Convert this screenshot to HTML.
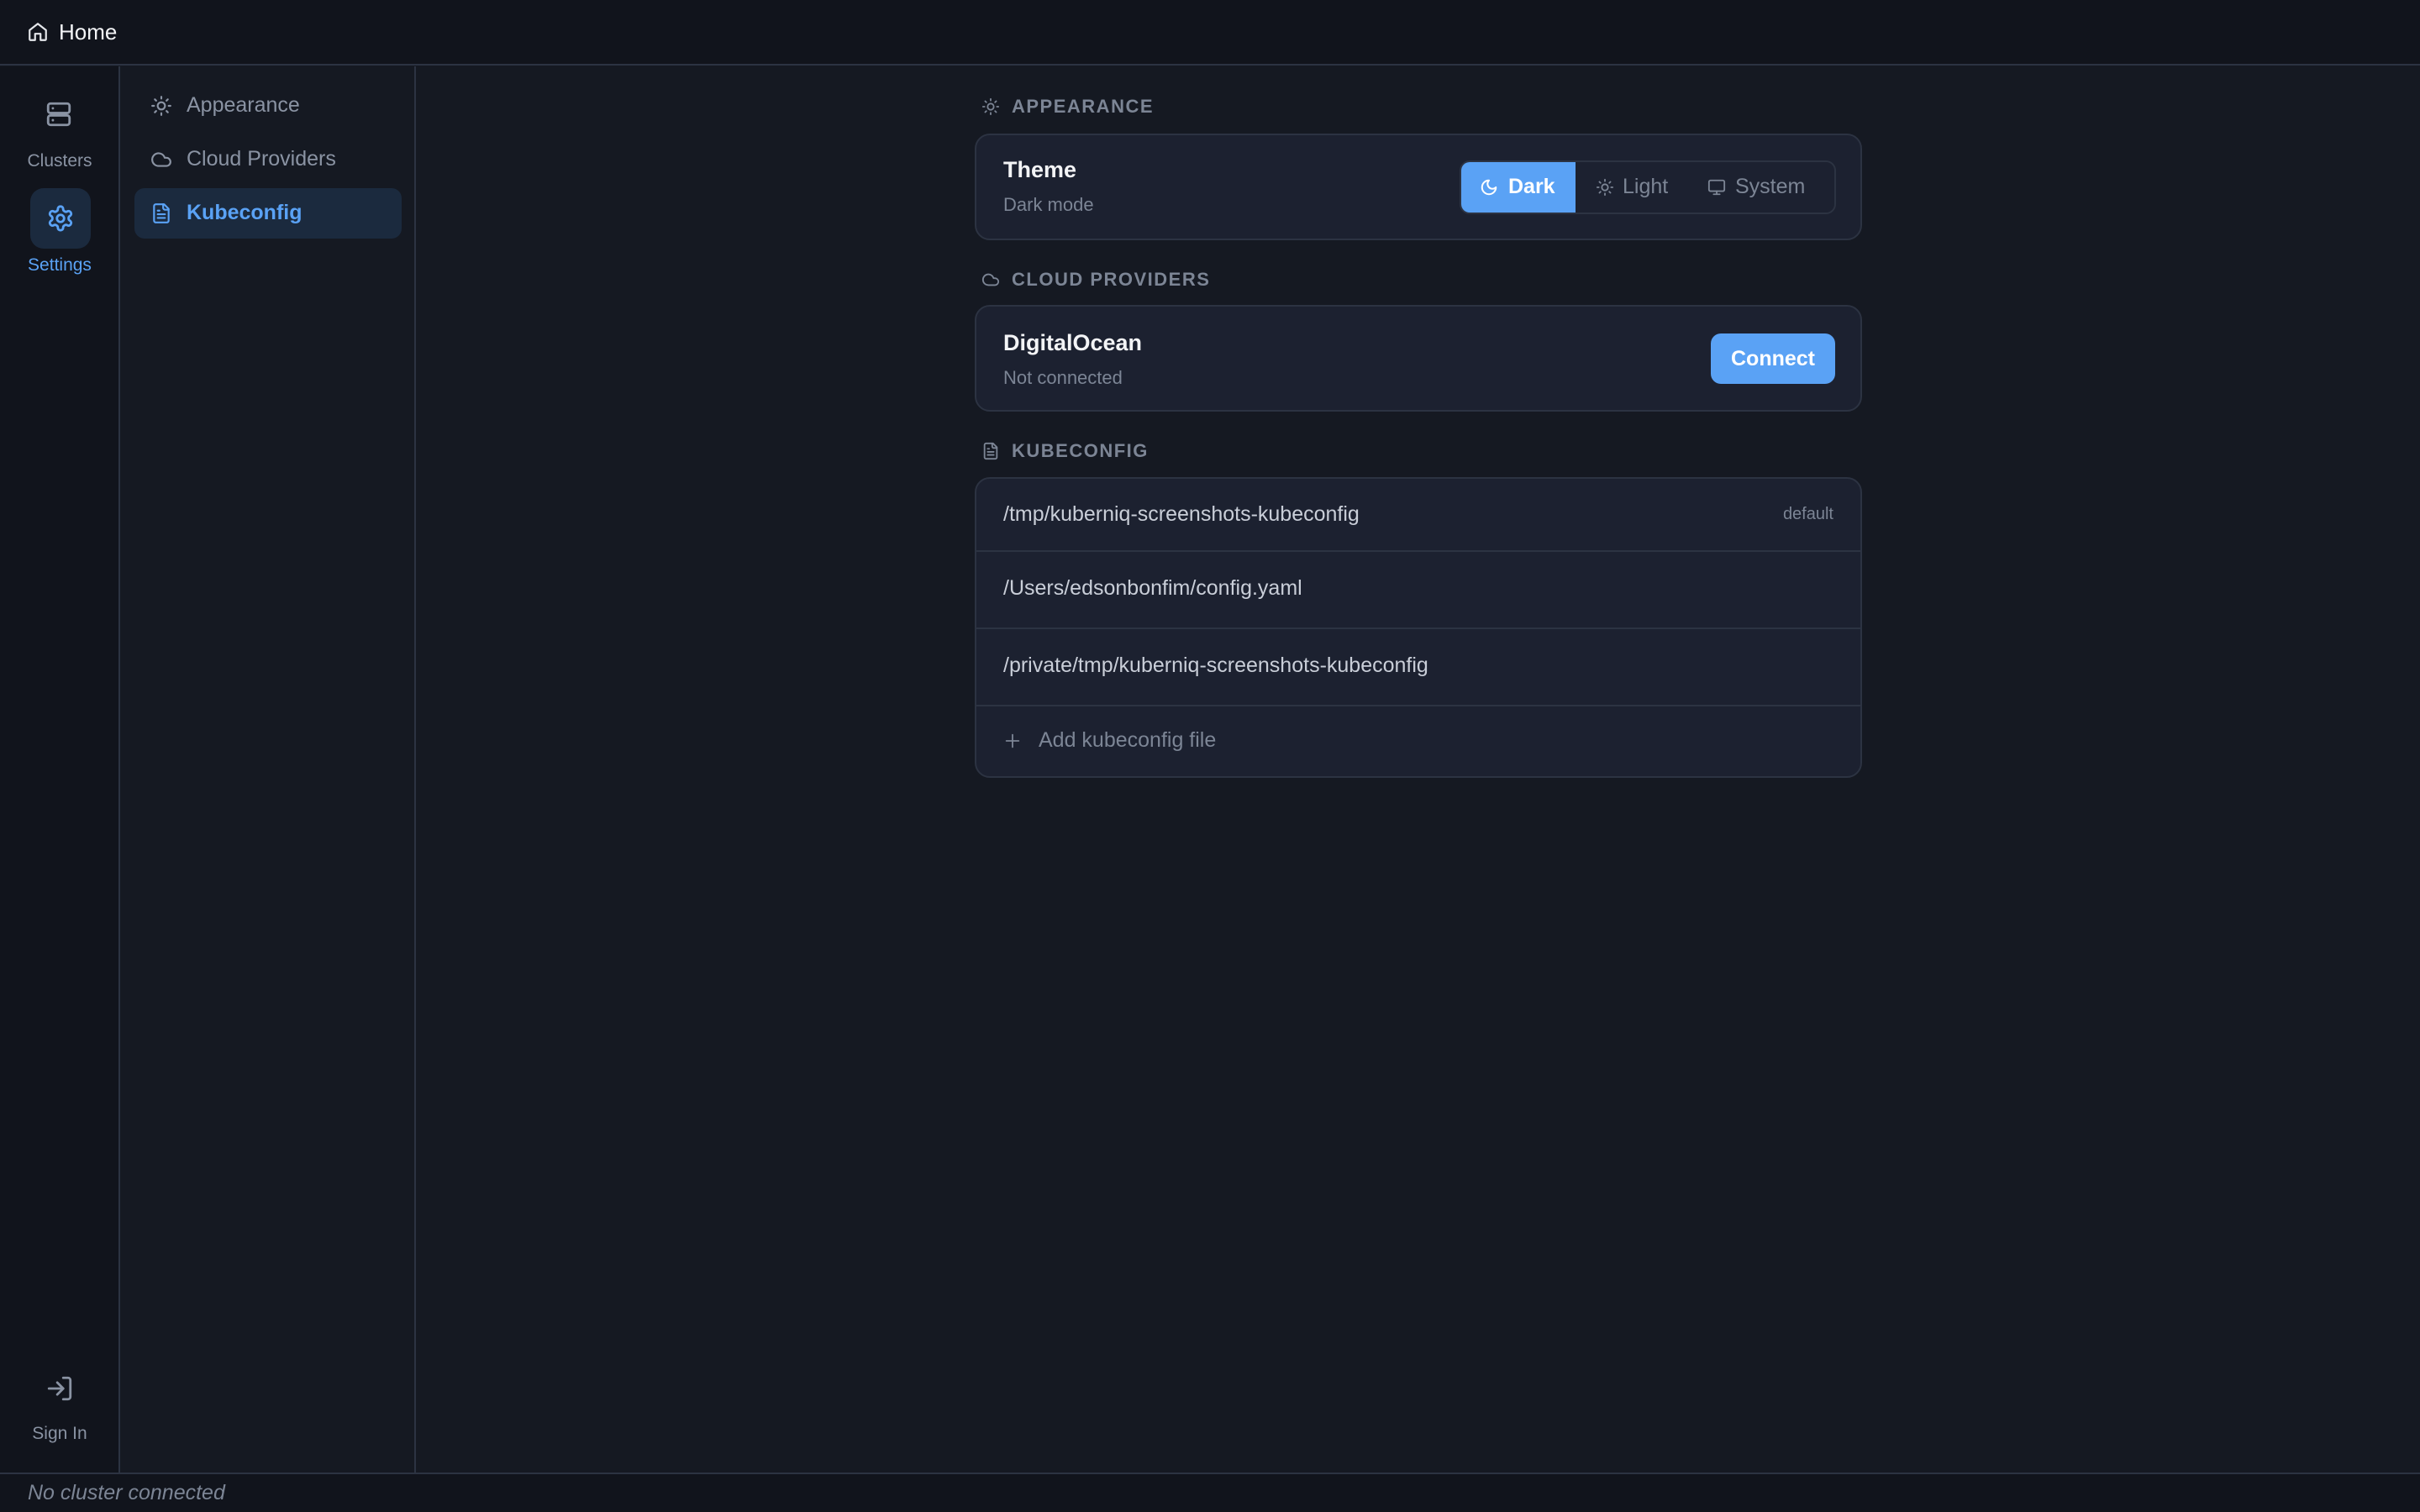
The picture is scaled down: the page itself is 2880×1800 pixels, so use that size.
<!DOCTYPE html>
<html><head><meta charset="utf-8"><style>
*{box-sizing:border-box;margin:0;padding:0}
body{width:2880px;height:1800px;overflow:hidden;background:#151922;font-family:"Liberation Sans",sans-serif;color:#e5e7eb;position:relative}
.a{position:absolute}
svg{fill:none;stroke-linecap:round;stroke-linejoin:round}
.top{left:0;top:0;width:2880px;height:78px;background:#11141c;border-bottom:2px solid #2c3342}
.rail{left:0;top:79px;width:143px;height:1674px;background:#11141c;border-right:2px solid #2c3342}
.side{left:143px;top:79px;width:352px;height:1674px;background:#151922;border-right:2px solid #2c3342}
.status{left:0;top:1753px;width:2880px;height:47px;background:#11141c;border-top:2px solid #2c3342}
.rl{width:142px;text-align:center;font-size:21px;color:#8a93a3}
.nav{font-size:25px;color:#8a93a3}
.sec{font-size:22px;font-weight:bold;letter-spacing:1.5px;color:#7c8595}
.card{left:1160px;width:1056px;background:#1c2130;border:2px solid #2c3342;border-radius:18px}
.t1{font-size:27px;font-weight:bold;color:#f3f4f6}
.t2{font-size:22px;color:#7c8595}
.p{font-size:25px;color:#c9ced8;left:32px}
.sep{left:0;width:1052px;height:2px;background:#2c3342}
</style></head><body>
<div class="a top">
 <svg class="a" style="left:32px;top:25px" width="26" height="26" viewBox="0 0 24 24" stroke="#e5e7eb" stroke-width="2"><path d="M3 10l9-7 9 7v10a1 1 0 0 1-1 1h-5v-7h-6v7H4a1 1 0 0 1-1-1z"/></svg>
 <div class="a" style="left:70px;top:23px;font-size:26px;color:#f3f4f6">Home</div>
</div>
<div class="a rail">
 <svg class="a" style="left:53px;top:40px" width="34" height="34" viewBox="0 0 24 24" stroke="#8a93a3" stroke-width="2"><rect x="3" y="3" width="18" height="8" rx="2"/><rect x="3" y="13" width="18" height="8" rx="2"/><path d="M7 7h.01M7 17h.01"/></svg>
 <div class="a rl" style="top:101px">Clusters</div>
 <div class="a" style="left:36px;top:145px;width:72px;height:72px;border-radius:16px;background:#1b2a3e"></div>
 <svg class="a" style="left:55px;top:164px" width="34" height="34" viewBox="0 0 24 24" stroke="#5aa2f5" stroke-width="2"><path d="M12.2 2h-.4a2 2 0 0 0-2 2v.2a2 2 0 0 1-1 1.7l-.4.3a2 2 0 0 1-2 0l-.2-.1a2 2 0 0 0-2.7.7l-.2.4a2 2 0 0 0 .7 2.7l.2.1a2 2 0 0 1 1 1.7v.5a2 2 0 0 1-1 1.7l-.2.1a2 2 0 0 0-.7 2.7l.2.4a2 2 0 0 0 2.7.7l.2-.1a2 2 0 0 1 2 0l.4.3a2 2 0 0 1 1 1.7v.2a2 2 0 0 0 2 2h.4a2 2 0 0 0 2-2v-.2a2 2 0 0 1 1-1.7l.4-.3a2 2 0 0 1 2 0l.2.1a2 2 0 0 0 2.7-.7l.2-.4a2 2 0 0 0-.7-2.7l-.2-.1a2 2 0 0 1-1-1.7v-.5a2 2 0 0 1 1-1.7l.2-.1a2 2 0 0 0 .7-2.7l-.2-.4a2 2 0 0 0-2.7-.7l-.2.1a2 2 0 0 1-2 0l-.4-.3a2 2 0 0 1-1-1.7V4a2 2 0 0 0-2-2z"/><circle cx="12" cy="12" r="3"/></svg>
 <div class="a rl" style="top:225px;color:#5aa2f5">Settings</div>
 <svg class="a" style="left:54px;top:1557px" width="34" height="34" viewBox="0 0 24 24" stroke="#8a93a3" stroke-width="2"><path d="M15 3h4a2 2 0 0 1 2 2v14a2 2 0 0 1-2 2h-4M10 17l5-5-5-5M15 12H3"/></svg>
 <div class="a rl" style="top:1616px">Sign In</div>
</div>
<div class="a side">
 <svg class="a" style="left:36px;top:34px" width="26" height="26" viewBox="0 0 24 24" stroke="#8a93a3" stroke-width="2"><circle cx="12" cy="12" r="4"/><path d="M12 2v2M12 20v2M4.9 4.9l1.4 1.4M17.7 17.7l1.4 1.4M2 12h2M20 12h2M6.3 17.7l-1.4 1.4M19.1 4.9l-1.4 1.4"/></svg>
 <div class="a nav" style="left:79px;top:32px">Appearance</div>
 <svg class="a" style="left:36px;top:98px" width="26" height="26" viewBox="0 0 24 24" stroke="#8a93a3" stroke-width="2"><path d="M17.5 19H9a7 7 0 1 1 6.7-9h1.8a4.5 4.5 0 1 1 0 9z"/></svg>
 <div class="a nav" style="left:79px;top:96px">Cloud Providers</div>
 <div class="a" style="left:17px;top:145px;width:318px;height:60px;border-radius:12px;background:#1b2a3e"></div>
 <svg class="a" style="left:36px;top:162px" width="26" height="26" viewBox="0 0 24 24" stroke="#5aa2f5" stroke-width="2"><path d="M15 2H6a2 2 0 0 0-2 2v16a2 2 0 0 0 2 2h12a2 2 0 0 0 2-2V7z"/><path d="M14 2v4a2 2 0 0 0 2 2h4M10 9H8M16 13H8M16 17H8"/></svg>
 <div class="a nav" style="left:79px;top:160px;color:#5aa2f5;font-weight:bold">Kubeconfig</div>
</div>
<div class="a status"><div class="a" style="left:33px;top:8px;font-size:25px;font-style:italic;color:#7c8595">No cluster connected</div></div>

<svg class="a" style="left:1168px;top:116px" width="22" height="22" viewBox="0 0 24 24" stroke="#7c8595" stroke-width="2"><circle cx="12" cy="12" r="4"/><path d="M12 2v2M12 20v2M4.9 4.9l1.4 1.4M17.7 17.7l1.4 1.4M2 12h2M20 12h2M6.3 17.7l-1.4 1.4M19.1 4.9l-1.4 1.4"/></svg>
<div class="a sec" style="left:1204px;top:114px">APPEARANCE</div>
<div class="a card" style="top:159px;height:127px">
 <div class="a t1" style="left:32px;top:26px">Theme</div>
 <div class="a t2" style="left:32px;top:70px">Dark mode</div>
 <div class="a" style="left:575px;top:30px;width:448px;height:64px;border:2px solid #2c3342;border-radius:12px;overflow:hidden">
  <div class="a" style="left:0;top:0;width:136px;height:60px;background:#5aa2f5"></div>
  <svg class="a" style="left:22px;top:19px" width="22" height="22" viewBox="0 0 24 24" stroke="#fff" stroke-width="2.2"><path d="M12 3a6 6 0 0 0 9 9 9 9 0 1 1-9-9z"/></svg>
  <div class="a" style="left:56px;top:15px;font-size:25px;font-weight:bold;color:#fff">Dark</div>
  <svg class="a" style="left:160px;top:19px" width="22" height="22" viewBox="0 0 24 24" stroke="#7c8595" stroke-width="2"><circle cx="12" cy="12" r="4"/><path d="M12 2v2M12 20v2M4.9 4.9l1.4 1.4M17.7 17.7l1.4 1.4M2 12h2M20 12h2M6.3 17.7l-1.4 1.4M19.1 4.9l-1.4 1.4"/></svg>
  <div class="a" style="left:192px;top:15px;font-size:25px;color:#7c8595">Light</div>
  <svg class="a" style="left:293px;top:19px" width="22" height="22" viewBox="0 0 24 24" stroke="#7c8595" stroke-width="2"><rect x="2" y="3" width="20" height="14" rx="2"/><path d="M8 21h8M12 17v4"/></svg>
  <div class="a" style="left:326px;top:15px;font-size:25px;color:#7c8595">System</div>
 </div>
</div>

<svg class="a" style="left:1168px;top:322px" width="22" height="22" viewBox="0 0 24 24" stroke="#7c8595" stroke-width="2"><path d="M17.5 19H9a7 7 0 1 1 6.7-9h1.8a4.5 4.5 0 1 1 0 9z"/></svg>
<div class="a sec" style="left:1204px;top:320px">CLOUD PROVIDERS</div>
<div class="a card" style="top:363px;height:127px">
 <div class="a t1" style="left:32px;top:28px">DigitalOcean</div>
 <div class="a t2" style="left:32px;top:72px">Not connected</div>
 <div class="a" style="left:874px;top:32px;width:148px;height:60px;background:#5aa2f5;border-radius:12px;color:#fff;font-size:25px;font-weight:bold;text-align:center;line-height:60px">Connect</div>
</div>

<svg class="a" style="left:1168px;top:526px" width="22" height="22" viewBox="0 0 24 24" stroke="#7c8595" stroke-width="2"><path d="M15 2H6a2 2 0 0 0-2 2v16a2 2 0 0 0 2 2h12a2 2 0 0 0 2-2V7z"/><path d="M14 2v4a2 2 0 0 0 2 2h4M10 9H8M16 13H8M16 17H8"/></svg>
<div class="a sec" style="left:1204px;top:524px">KUBECONFIG</div>
<div class="a card" style="top:568px;height:358px">
 <div class="a p" style="top:28px">/tmp/kuberniq-screenshots-kubeconfig</div>
 <div class="a" style="right:32px;top:31px;font-size:20px;color:#7c8595">default</div>
 <div class="a sep" style="top:85px"></div>
 <div class="a p" style="top:116px">/Users/edsonbonfim/config.yaml</div>
 <div class="a sep" style="top:177px"></div>
 <div class="a p" style="top:208px">/private/tmp/kuberniq-screenshots-kubeconfig</div>
 <div class="a sep" style="top:269px"></div>
 <svg class="a" style="left:32px;top:301px" width="22" height="22" viewBox="0 0 24 24" stroke="#7c8595" stroke-width="2"><path d="M12 4v16M4 12h16"/></svg>
 <div class="a" style="left:74px;top:297px;font-size:25px;color:#7c8595">Add kubeconfig file</div>
</div>
</body></html>
